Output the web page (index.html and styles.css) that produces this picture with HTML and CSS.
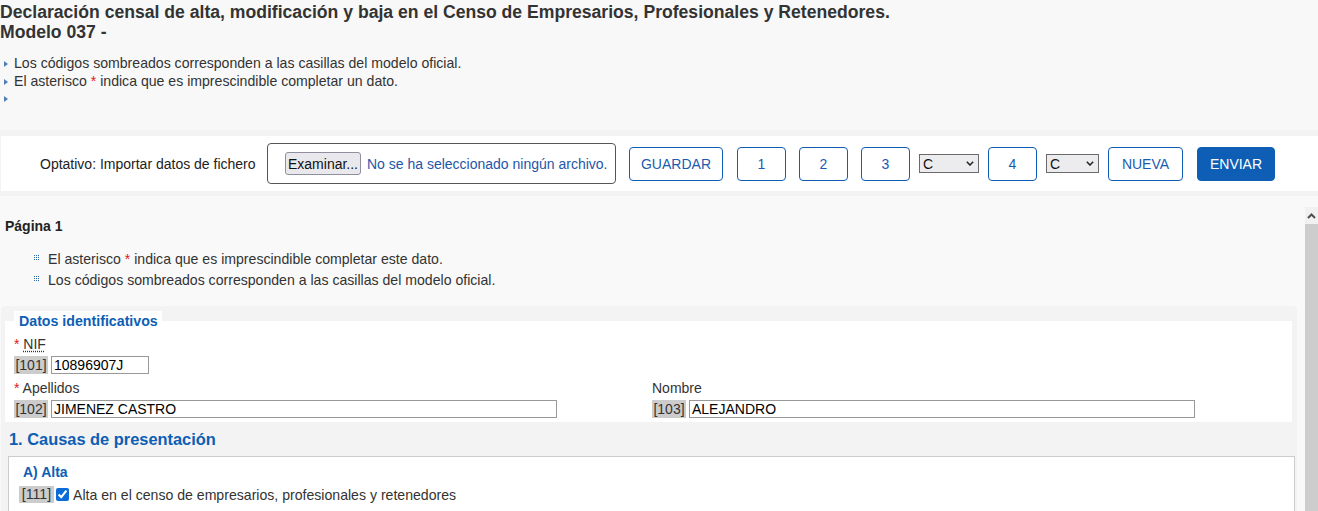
FILE: index.html
```html
<!DOCTYPE html>
<html lang="es">
<head>
<meta charset="utf-8">
<title>Modelo 037</title>
<link rel="stylesheet" href="styles.css">
</head>
<body>
<div class="page">
  <header class="head">
    <h1 class="title">Declaración censal de alta, modificación y baja en el Censo de Empresarios, Profesionales y Retenedores.<br>Modelo 037 -</h1>
    <ul class="notes">
      <li>Los códigos sombreados corresponden a las casillas del modelo oficial.</li>
      <li>El asterisco <span class="req">*</span> indica que es imprescindible completar un dato.</li>
      <li></li>
    </ul>
  </header>

  <div class="strip">
    <div class="toolbar">
      <span class="tb-label">Optativo: Importar datos de fichero</span>
      <div class="filebox">
        <button class="browse" type="button">Examinar...</button>
        <span class="nofile">No se ha seleccionado ningún archivo.</span>
      </div>
      <button class="btn btn-save" type="button">GUARDAR</button>
      <button class="btn btn-num" type="button">1</button>
      <button class="btn btn-num" type="button">2</button>
      <button class="btn btn-num btn-tight" type="button">3</button>
      <div class="sel sel-a"><span>C</span><svg width="8" height="5" viewBox="0 0 8 5"><polyline points="0.8,0.8 4,4 7.2,0.8" fill="none" stroke="#222" stroke-width="1.5"/></svg></div>
      <button class="btn btn-num btn-tight" type="button">4</button>
      <div class="sel sel-b"><span>C</span><svg width="8" height="5" viewBox="0 0 8 5"><polyline points="0.8,0.8 4,4 7.2,0.8" fill="none" stroke="#222" stroke-width="1.5"/></svg></div>
      <button class="btn btn-new" type="button">NUEVA</button>
      <button class="btn btn-send" type="button">ENVIAR</button>
    </div>
  </div>

  <div class="frame">
    <div class="frame-body">
      <h2 class="pagetitle">Página 1</h2>
      <ul class="hints">
        <li><svg class="dots" width="5" height="5" viewBox="0 0 5 5"><path d="M0 0h1v1H0zM2 0h1v1H2zM4 0h1v1H4zM0 2h1v1H0zM2 2h1v1H2zM4 2h1v1H4zM0 4h1v1H0zM2 4h1v1H2zM4 4h1v1H4z" fill="#2d64a6"/></svg>El asterisco <span class="req">*</span> indica que es imprescindible completar este dato.</li>
        <li><svg class="dots" width="5" height="5" viewBox="0 0 5 5"><path d="M0 0h1v1H0zM2 0h1v1H2zM4 0h1v1H4zM0 2h1v1H0zM2 2h1v1H2zM4 2h1v1H4zM0 4h1v1H0zM2 4h1v1H2zM4 4h1v1H4z" fill="#2d64a6"/></svg>Los códigos sombreados corresponden a las casillas del modelo oficial.</li>
      </ul>

      <div class="form-wrap">
        <fieldset class="datos">
          <legend>Datos identificativos</legend>
          <div class="fields">
            <div class="field">
              <div class="flabel"><span class="req">*</span> <abbr title="Número de Identificación Fiscal">NIF</abbr></div>
              <div class="frow"><span class="code">[101]</span><input class="inp inp-nif" type="text" value="10896907J"></div>
            </div>
            <div class="field"></div>
            <div class="field">
              <div class="flabel"><span class="req">*</span> Apellidos</div>
              <div class="frow"><span class="code">[102]</span><input class="inp inp-wide" type="text" value="JIMENEZ CASTRO"></div>
            </div>
            <div class="field">
              <div class="flabel">Nombre</div>
              <div class="frow"><span class="code">[103]</span><input class="inp inp-wide" type="text" value="ALEJANDRO"></div>
            </div>
          </div>
        </fieldset>

        <h3 class="section">1. Causas de presentación</h3>
        <div class="box">
          <h4 class="subsection">A) Alta</h4>
          <label class="check-row"><span class="code code-sm">[111]</span><input class="chk" type="checkbox" checked>Alta en el censo de empresarios, profesionales y retenedores</label>
        </div>
      </div>
    </div>
    <div class="scrollbar">
      <div class="sb-up"><svg width="9" height="6" viewBox="0 0 9 6"><polyline points="1,5 4.5,1.5 8,5" fill="none" stroke="#505050" stroke-width="2"/></svg></div>
      <div class="sb-thumb"></div>
    </div>
  </div>
</div>
</body>
</html>
```

FILE: styles.css
```css
* { box-sizing: border-box; }
html, body { margin: 0; padding: 0; }
body {
  font-family: "Liberation Sans", Arial, sans-serif;
  font-size: 14px;
  color: #333;
  background: #f9f9f9;
  overflow: hidden;
}
.page {
  display: flex;
  flex-direction: column;
  height: 511px;
}

/* header */
.head {
  flex: none;
  height: 130px;
  padding-top: 2px;
  background: #f8f8f8;
}
.title {
  margin: 0;
  font-size: 17.6px;
  line-height: 20px;
  font-weight: bold;
  color: #333;
}
.notes {
  list-style: none;
  margin: 13px 0 0;
  padding: 0;
  line-height: 17.5px;
  font-size: 14.1px;
}
.notes li {
  padding-left: 4px;
  min-height: 17.5px;
}
.notes li::before {
  content: "";
  display: inline-block;
  border-left: 4px solid #4f7fb3;
  border-top: 3.5px solid transparent;
  border-bottom: 3.5px solid transparent;
  margin-right: 6px;
  vertical-align: 1px;
}
.req { color: #e0171b; }

/* toolbar */
.strip {
  flex: none;
  background: #f3f3f3;
  padding: 6px 0 5px 1px;
}
.toolbar {
  height: 55px;
  background: #fff;
  display: flex;
  align-items: center;
  padding-left: 39px;
  font-size: 14px;
  color: #222;
}
.tb-label {
  width: 218px;
  margin-right: 9px;
  white-space: nowrap;
}
.filebox {
  width: 349px;
  height: 41px;
  border: 1px solid #555;
  border-radius: 4px;
  display: flex;
  align-items: center;
  padding-left: 17px;
  gap: 6px;
  margin-right: 13px;
}
.browse {
  width: 76px;
  height: 23px;
  padding: 0;
  font: 14px "Liberation Sans", Arial, sans-serif;
  color: #111;
  background: #e9e9ed;
  border: 1px solid #8f8f9d;
  border-radius: 3px;
}
.nofile { color: #1f56a8; }
.btn {
  height: 34px;
  padding: 0;
  font: 14px "Liberation Sans", Arial, sans-serif;
  color: #1a5bb0;
  background: #fff;
  border: 1px solid #0d5eb4;
  border-radius: 4px;
  margin-right: 13px;
}
.btn-save { width: 94px; margin-right: 14px; }
.btn-num { width: 49px; }
.btn-tight { margin-right: 9px; }
.btn-new { width: 75px; margin-right: 14px; }
.btn-send {
  width: 78px;
  background: #0d5eb4;
  color: #fff;
}
.sel {
  height: 19px;
  border: 1px solid #6a6a6a;
  background: #ececee;
  display: flex;
  align-items: center;
  justify-content: space-between;
  padding: 0 4px 0 3px;
  color: #111;
  margin-right: 9px;
}
.sel-a { width: 60px; }
.sel-b { width: 53px; }

/* frame */
.frame {
  flex: 1;
  min-height: 0;
  margin-top: 11px;
  display: flex;
}
.frame-body {
  flex: 1;
  min-width: 0;
  overflow: hidden;
  padding-top: 11px;
}
.pagetitle {
  margin: 0 0 0 5px;
  font-size: 14px;
  line-height: 16px;
  font-weight: bold;
  color: #222;
}
.hints {
  list-style: none;
  margin: 15px 0 0;
  padding: 0 0 0 34px;
  line-height: 21px;
  font-size: 14.1px;
}
.dots {
  vertical-align: 4px;
  margin-right: 9px;
}

.form-wrap {
  margin: 15px 8px 0 1px;
  padding: 5px 2px 0 4px;
  background: #f3f3f3;
  border-radius: 4px 4px 0 0;
  min-height: 300px;
}
.datos {
  margin: 0 3px 0 0;
  border: 0;
  padding: 4px 2px 4px 9px;
  min-width: 0;
  background: #fff;
}
.datos legend {
  padding: 0 4px 0 5px;
  font-size: 14.2px;
  line-height: 20px;
  font-weight: bold;
  color: #0d5eb4;
  background: #fff;
}
.fields {
  display: grid;
  grid-template-columns: 1fr 1fr;
}
.flabel {
  line-height: 18px;
  margin-bottom: 3px;
}
.flabel abbr {
  text-decoration: underline dotted;
  text-underline-offset: 2px;
}
.frow {
  display: flex;
  align-items: center;
  height: 18px;
  margin-bottom: 5px;
}
.fields .field:nth-child(n+3) .frow { margin-bottom: 0; }
.code {
  display: inline-block;
  height: 18px;
  line-height: 18px;
  width: 34px;
  text-align: center;
  background: #cccccc;
  color: #333;
  margin-right: 3px;
}
.inp {
  height: 18px;
  border: 1px solid #999;
  padding: 0 2px;
  font: 14px "Liberation Sans", Arial, sans-serif;
  color: #000;
  background: #fff;
  outline: none;
}
.inp-nif { width: 98px; }
.inp-wide { width: 506px; }

.section {
  margin: 8px 0 0 4px;
  font-size: 16.4px;
  line-height: 18px;
  font-weight: bold;
  color: #0d5eb4;
}
.box {
  margin: 8px 0 0 3px;
  border: 1px solid #cccccc;
  background: #fff;
  padding: 7px 0 20px 10px;
}
.subsection {
  margin: 0 0 0 4px;
  font-size: 14px;
  line-height: 16px;
  font-weight: bold;
  color: #0d5eb4;
}
.check-row {
  display: flex;
  align-items: center;
  height: 17px;
  margin-top: 6px;
  font-size: 14.1px;
}
.code-sm { height: 17px; line-height: 17px; width: 35px; margin-right: 2px; }
.chk {
  width: 13px;
  height: 13px;
  margin: 0 4px 0 0;
  accent-color: #0b6bd8;
}

/* scrollbar */
.scrollbar {
  flex: none;
  width: 13px;
  display: flex;
  flex-direction: column;
  background: #cdcdcd;
}
.sb-up {
  height: 17px;
  background: #f1f1f1;
  display: flex;
  align-items: center;
  justify-content: center;
}
.sb-thumb { flex: 1; background: #cdcdcd; }
```
